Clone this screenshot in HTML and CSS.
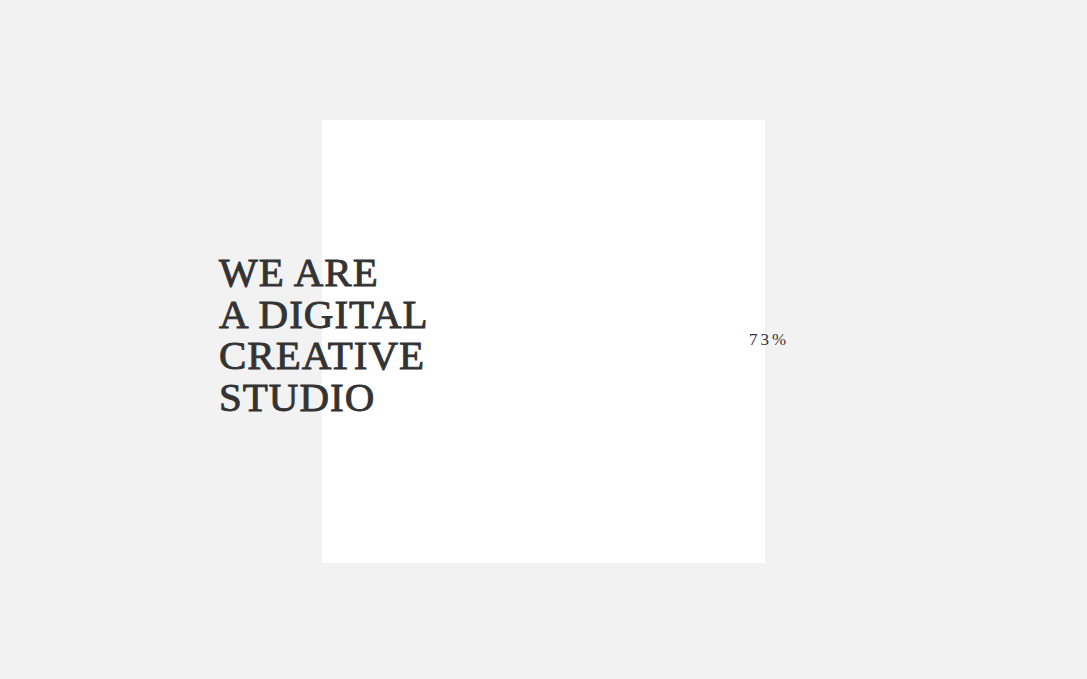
FILE: index.html
```html
<!DOCTYPE html>
<html lang="en">
<head>
<meta charset="utf-8">
<title>Studio</title>
<link rel="stylesheet" href="styles.css">
</head>
<body>
<main class="stage">
  <div class="square"></div>
  <h1 class="headline">WE ARE<br>A DIGITAL<br>CREATIVE<br>STUDIO</h1>
  <div class="progress">73%</div>
</main>
</body>
</html>
```
FILE: styles.css
```css
html, body {
  margin: 0;
  padding: 0;
  height: 100%;
  background: #f2f2f2;
}
.stage {
  position: relative;
  width: 100%;
  height: 100vh;
  display: flex;
  align-items: center;
  justify-content: center;
  overflow: hidden;
}
.square {
  width: 443px;
  height: 443px;
  background: #ffffff;
  margin-top: 4px;
}
.headline {
  position: absolute;
  left: 219px;
  top: 252px;
  margin: 0;
  font-family: "Liberation Serif", "DejaVu Serif", serif;
  font-weight: 400;
  font-size: 41px;
  line-height: 41.5px;
  color: #333333;
  -webkit-text-stroke: 0.9px #333333;
  letter-spacing: 1px;
}
.progress {
  position: absolute;
  left: 749px;
  top: 330px;
  font-family: "Liberation Serif", "DejaVu Serif", serif;
  font-size: 17px;
  line-height: 20px;
  letter-spacing: 3px;
  color: #333333;
}
```
